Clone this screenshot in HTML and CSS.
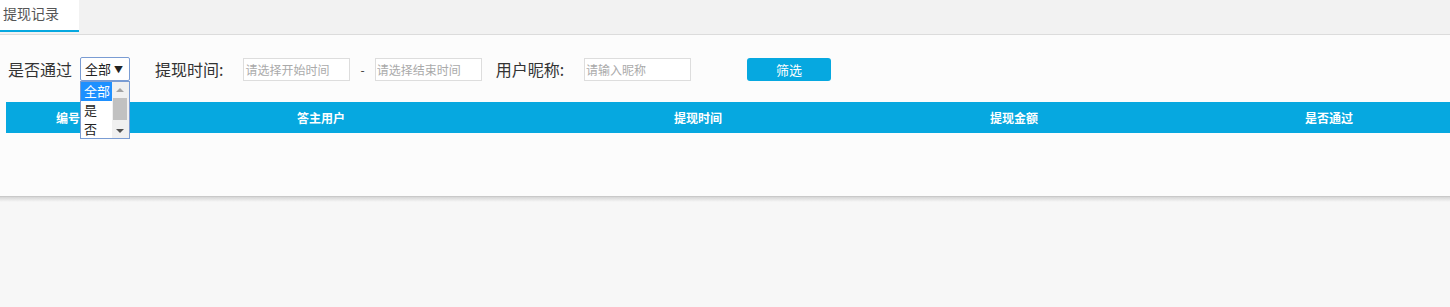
FILE: index.html
```html
<!DOCTYPE html>
<html lang="zh-CN">
<head>
    <meta charset="UTF-8">
    <title>提现记录</title>
    <link rel="stylesheet" href="styles.css">
</head>
<body>
    <!-- Abas -->
    <div class="tabs">
        <div class="tab active">提现记录</div>
    </div>

    <div class="panel">
        <!-- Filtros -->
        <div class="filters">
            <span class="label">是否通过</span>
            <div class="select-wrap">
                <div class="select">全部<span class="arrow">▼</span></div>
                <div class="dropdown">
                    <div class="options">
                        <div class="option selected">全部</div>
                        <div class="option">是</div>
                        <div class="option">否</div>
                    </div>
                    <div class="scrollbar">
                        <span class="sb-up"></span>
                        <span class="sb-thumb"></span>
                        <span class="sb-down"></span>
                    </div>
                </div>
            </div>

            <span class="label label-time">提现时间:</span>
            <input class="field field-start" type="text" placeholder="请选择开始时间">
            <span class="dash">-</span>
            <input class="field field-end" type="text" placeholder="请选择结束时间">

            <span class="label label-nick">用户昵称:</span>
            <input class="field field-nick" type="text" placeholder="请输入昵称">

            <button class="btn-filter">筛选</button>
        </div>

        <!-- Tabela -->
        <div class="table-wrap">
            <table class="records">
                <thead>
                    <tr>
                        <th class="c1">编号</th>
                        <th class="c2">答主用户</th>
                        <th class="c3">提现时间</th>
                        <th class="c4">提现金额</th>
                        <th class="c5">是否通过</th>
                    </tr>
                </thead>
            </table>
        </div>
    </div>
    <div class="panel-shadow"></div>
</body>
</html>
```

FILE: styles.css
```css
/* Página */
body {
    margin: 0;
    padding: 0;
    background-color: #f7f7f7;
    font-family: "Noto Sans CJK SC", "Noto Sans", sans-serif;
    color: #333;
}

/* Abas */
.tabs {
    height: 34px;
    background-color: #f2f2f2;
    border-bottom: 1px solid #dcdcdc;
    display: flex;
}
.tab {
    width: 79px;
    height: 32px;
    line-height: 27px;
    padding-left: 3px;
    box-sizing: border-box;
    font-size: 14px;
    color: #555;
    background-color: #fff;
    border-bottom: 2px solid #06a8e0;
}

/* Painel */
.panel {
    background-color: #fcfcfc;
    height: 162px;
    padding-top: 22px;
    box-sizing: border-box;
    border-bottom: 1px solid #c9c9c9;
}
/* Sombra abaixo do painel */
.panel-shadow {
    height: 5px;
    background: linear-gradient(#d6d6d6, #f7f7f7);
}

/* Filtros */
.filters {
    display: flex;
    align-items: center;
    padding-left: 8px;
    height: 24px;
}
.label {
    font-size: 16px;
    color: #333;
    line-height: 24px;
}
.label-time {
    margin-left: 25px;
}
.label-nick {
    margin-left: 14px;
}
.select-wrap {
    position: relative;
    margin-left: 8px;
}
.select {
    width: 50px;
    height: 24px;
    box-sizing: border-box;
    border: 1px solid #7a9cd3;
    border-radius: 2px;
    background-color: #fff;
    font-size: 13px;
    line-height: 21px;
    padding-left: 4px;
    color: #222;
}
.arrow {
    font-size: 9px;
    margin-left: 3px;
    vertical-align: 1px;
}

/* Lista aberta do select */
.dropdown {
    position: absolute;
    top: 24px;
    left: 0;
    width: 50px;
    height: 58px;
    box-sizing: border-box;
    border: 1px solid #7a9cd3;
    background-color: #fff;
    display: flex;
    z-index: 2;
}
.options {
    width: 31px;
}
.option {
    height: 19px;
    line-height: 18px;
    font-size: 13px;
    padding-left: 3px;
    color: #222;
}
.option.selected {
    background-color: #1e90ff;
    color: #fff;
}
.scrollbar {
    width: 17px;
    background-color: #f0f0f0;
    position: relative;
}
.sb-up, .sb-down {
    position: absolute;
    left: 4px;
    width: 0;
    height: 0;
    border-left: 4px solid transparent;
    border-right: 4px solid transparent;
}
.sb-up {
    top: 6px;
    border-bottom: 4px solid #a3a3a3;
}
.sb-down {
    bottom: 5px;
    border-top: 4px solid #505050;
}
.sb-thumb {
    position: absolute;
    top: 16px;
    left: 1px;
    width: 14px;
    height: 22px;
    background-color: #c1c1c1;
}

/* Campos */
.field {
    width: 107px;
    height: 23px;
    box-sizing: border-box;
    border: 1px solid #ddd;
    background-color: #fff;
    font-size: 12px;
    padding: 0 1px;
    font-family: "Noto Sans CJK SC", "Noto Sans", sans-serif;
}
.field::placeholder {
    color: #aaa;
}
.field-start {
    margin-left: 20px;
}
.field-end {
    margin-left: 10px;
}
.field-nick {
    margin-left: 20px;
}
.dash {
    font-size: 12px;
    margin-left: 10px;
    color: #333;
}
.btn-filter {
    width: 84px;
    height: 23px;
    margin-left: 56px;
    border: none;
    border-radius: 3px;
    background-color: #06a8e0;
    color: #fff;
    font-size: 13px;
    font-family: "Noto Sans CJK SC", "Noto Sans", sans-serif;
    padding: 0;
}

/* Tabela */
.table-wrap {
    margin-top: 21px;
    padding-left: 6px;
    overflow: hidden;
}
.records {
    border-collapse: collapse;
    table-layout: fixed;
    width: 1508px;
}
.records th {
    height: 31px;
    padding: 0;
    background-color: #06a8e0;
    color: #fff;
    font-size: 12px;
    font-weight: bold;
    text-align: center;
}
.c1 { width: 124px; }
.c2 { width: 382px; }
.c3 { width: 372px; }
.c4 { width: 260px; }
.c5 { width: 370px; }
```
